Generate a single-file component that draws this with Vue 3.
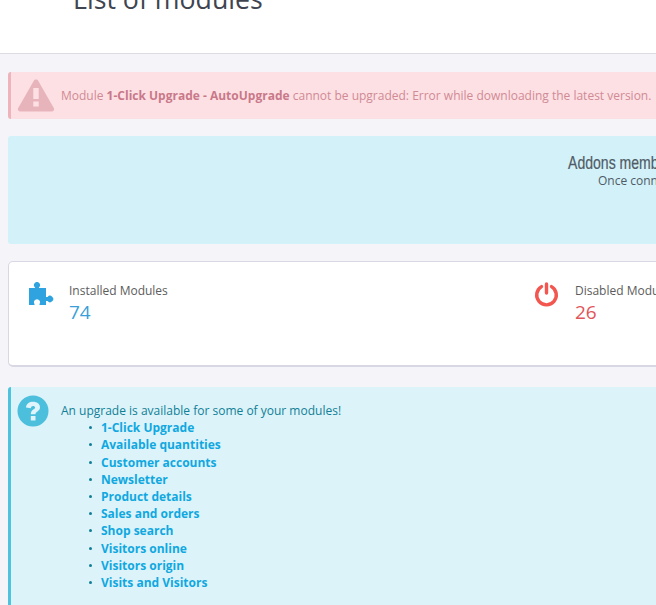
<script setup>
const modules = ['1-Click Upgrade','Available quantities','Customer accounts','Newsletter','Product details','Sales and orders','Shop search','Visitors online','Visitors origin','Visits and Visitors']
</script>

<template>
  <div class="page">
    <header class="head"><h1>List of modules</h1></header>
    <main class="content">
      <section class="alert danger">
        <svg class="warn" width="38" height="34" viewBox="0 0 38 34">
          <path d="M19 1.500c1 0 1.800.5 2.300 1.400l15.500 27c.9 1.700-.2 3.600-2.100 3.600H3.300c-1.900 0-3-1.900-2.100-3.600l15.500-27C17.200 2 18 1.500 19 1.500z" fill="#e8b4bc"/>
          <rect x="16.300" y="10" width="5.400" height="11" fill="#fde0e3"/>
          <rect x="16.300" y="23.500" width="5.400" height="5" fill="#fde0e3"/>
        </svg>
        <p>Module <b>1-Click Upgrade - AutoUpgrade</b> cannot be upgraded: Error while downloading the latest version.</p>
      </section>
      <section class="addons">
        <h2>Addons member account</h2>
        <p>Once connected to your account</p>
      </section>
      <section class="stats">
        <div class="stat first">
          <svg class="puzzle" width="26" height="25" viewBox="0 0 26 25">
            <path fill="#2ea3e0" d="M1 6h6v-.6a3 3 0 1 1 4 0V6h7v9h1.500a3.200 3.200 0 1 1 0 4H18v4h-6.500v-1a3 3 0 1 0-5 0v1H1z"/>
          </svg>
          <div><div class="label">Installed Modules</div><div class="num blue">74</div></div>
        </div>
        <div class="stat">
          <svg class="power" width="25" height="26" viewBox="0 0 25 26">
            <path d="M7.500 5.600a9.800 9.800 0 1 0 10 0" fill="none" stroke="#f2564f" stroke-width="3.400" stroke-linecap="round"/>
            <path d="M12.500 3v9" fill="none" stroke="#f2564f" stroke-width="3.400" stroke-linecap="round"/>
          </svg>
          <div><div class="label">Disabled Modules</div><div class="num red">26</div></div>
        </div>
      </section>
      <section class="alert info">
        <svg class="help" width="32" height="32" viewBox="0 0 32 32">
          <circle cx="16" cy="16" r="15.500" fill="#4bbfdc"/>
          <path d="M9 12.500c.3-3.800 3.200-5.700 7-5.700 4 0 7 2.200 7 5.500 0 4.200-4.500 4.200-4.500 7h-4.700c0-5 4.300-4.800 4.300-6.800 0-.9-.9-1.500-2-1.500-1.200 0-2 .7-2.300 2.200z" fill="#dff4fb"/>
          <rect x="13.800" y="21" width="4.700" height="4.500" fill="#dff4fb"/>
        </svg>
        <div class="msg">
          <p>An upgrade is available for some of your modules!</p>
          <ul><li v-for="m in modules" :key="m"><a>{{ m }}</a></li></ul>
        </div>
      </section>
    </main>
  </div>
</template>

<style scoped>
.page{width:656px;height:605px;overflow:hidden;background:#f4f4f9;font-family:"Open Sans",sans-serif;font-size:12px;color:#555}
.head{height:53px;background:#fff;border-bottom:1px solid #dcdde3;overflow:hidden}
h1{margin:-18px 0 0 73px;font-size:26.700px;line-height:33px;font-weight:400;color:#3e4550;white-space:nowrap}
.content{width:1000px;margin-left:8px;padding-top:18px}
p{margin:0}
.alert{display:flex;border-radius:3px 0 0 3px;box-sizing:border-box}
.danger{height:47px;background:#fde0e3;border-left:3px solid #eeb4bc;color:#d08a95;align-items:center;gap:6px;padding-left:6px;margin-bottom:17px}
.warn{flex:none;margin-top:-1px}
.danger b{font-weight:700;color:#c9788a}
.addons{height:108px;background:#d3f1f8;border-radius:3px 0 0 3px;margin-bottom:17px;padding-top:16px;box-sizing:border-box;color:#4f5b66;padding-left:560px}
.addons h2{margin:0;font:400 18.500px/22px "Liberation Sans",sans-serif;color:#4f5b66;white-space:nowrap;transform:scaleX(.76);transform-origin:left center;-webkit-text-stroke:.2px #4f5b66}
.addons p{padding-left:30px;line-height:14px}
.stats{height:106px;background:#fff;border:1px solid #d8d8e4;border-bottom:2px solid #d8d8e4;box-sizing:border-box;border-radius:5px 0 0 5px;display:flex;margin-bottom:20px}
.stat{display:flex;gap:14px;padding-top:19px}
.stat.first{width:528px;padding-left:19px;gap:15px;box-sizing:border-box}
.puzzle{flex:none;margin-top:1px}
.power{flex:none;margin:0 2px 0 -3px}
.label{line-height:19px;color:#5c5c5c}
.num{font-size:19px;line-height:24px}
.blue{color:#3a9fd8}
.red{color:#e2555a}
.info{height:230px;background:#dcf3fa;border-left:3px solid #4ec3de;padding:8px 0 0 6px;color:#107f96;gap:12px}
.help{flex:none}
.msg{padding-top:8px}
.msg p{line-height:16.200px}
ul{margin:0;padding:0 0 0 40px;list-style:none}
li{display:flex;align-items:center;height:17.200px}
li::before{content:"";width:3px;height:3px;border-radius:50%;background:#107f96;margin-left:-12px;margin-right:9px;flex:none}
a{font-weight:700;color:#10a8e0}
</style>
